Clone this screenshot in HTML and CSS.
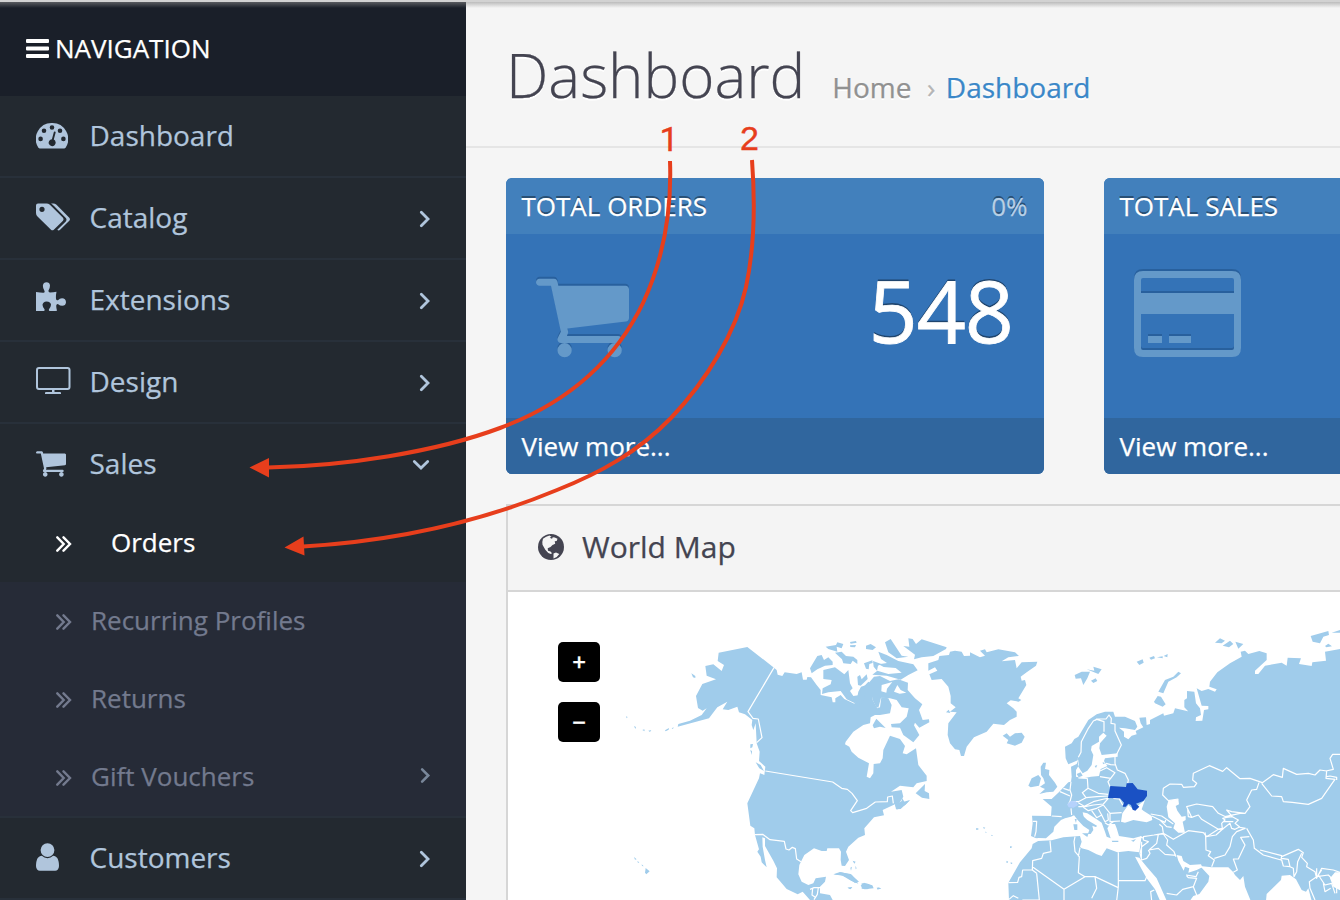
FILE: index.html
```html
<!DOCTYPE html>
<html lang="en">
<head>
<meta charset="utf-8">
<title>Dashboard</title>
<link rel="stylesheet" href="styles.css">
</head>
<body>
<svg class="defs" width="0" height="0">
  <symbol id="cart" viewBox="0 256 1664 1408"><path d="M640 1536q0 52-38 90t-90 38-90-38-38-90 38-90 90-38 90 38 38 90zm896 0q0 52-38 90t-90 38-90-38-38-90 38-90 90-38 90 38 38 90zm128-1088v512q0 24-16.500 42.500t-40.500 21.500l-1044 122q13 60 13 70 0 16-24 64h920q26 0 45 19t19 45-19 45-45 19h-1024q-26 0-45-19t-19-45q0-11 8-31.500t16-36 21.500-40 15.500-29.500l-177-823h-204q-26 0-45-19t-19-45 19-45 45-19h256q16 0 28.500 6.500t19.500 15.500 13 24.500 8 26 5.500 29.500 4.500 26h1201q26 0 45 19t19 45z"/></symbol>
  <symbol id="right" viewBox="0 0 12 18"><path class="line" d="M2.300 2.300L9 9l-6.700 6.700"/></symbol>
  <symbol id="double" viewBox="0 0 16 16"><path class="line thin" d="M1.300 1.300L7.700 8l-6.400 6.700M7.500 1.300L14 8l-6.500 6.700"/></symbol>
</svg>
<div class="page">
  <nav class="sidebar">
    <div class="nav-title"><svg width="23" height="20" viewBox="0 0 23 20"><path d="M1 0h21q1 0 1 1v2q0 1-1 1H1Q0 4 0 3V1q0-1 1-1zM1 7.500h21q1 0 1 1v2q0 1-1 1H1q-1 0-1-1v-2q0-1 1-1zM1 15h21q1 0 1 1v2q0 1-1 1H1q-1 0-1-1v-2q0-1 1-1z"/></svg><span>NAVIGATION</span></div>
    <ul class="menu">
      <li class="item"><span class="icon gauge"><svg width="32" height="26" viewBox="0 0 32 26"><path fill-rule="evenodd" d="M16 0a16 16 0 0 1 13.600 24.700q-.5.800-1.500.8H3.900q-1 0-1.500-.8A16 16 0 0 1 16 0zM16 2.200a2.300 2.300 0 1 0 0 4.600 2.300 2.300 0 0 0 0-4.600zM8 5.500a2.300 2.300 0 1 0 0 4.600 2.300 2.300 0 0 0 0-4.600zM24 5.500a2.300 2.300 0 1 0 0 4.600 2.300 2.300 0 0 0 0-4.600zM4.600 13.600a2.300 2.300 0 1 0 0 4.600 2.300 2.300 0 0 0 0-4.600zM27.400 13.600a2.300 2.300 0 1 0 0 4.600 2.300 2.300 0 0 0 0-4.600zM17.800 9.300q.3-1 1.100-.7.900.2.700 1.200l-1.800 6.800a3.500 3.500 0 1 1-1.900-.4z"/></svg></span><span class="label">Dashboard</span></li>
      <li class="item"><span class="icon"><svg width="34" height="28" viewBox="0 0 34 28"><path fill-rule="evenodd" d="M2 .5h8.500q1.800 0 3.400 1.300L27 14.800q1.200 1.400 0 2.900l-9.200 9q-1.400 1.200-2.800 0L1.500 13.500Q0 12 0 10V2.500Q0 .5 2 .5zM6 3.700a2.600 2.600 0 1 0 0 5.200 2.600 2.600 0 0 0 0-5.200z"/><path d="M15 .5h2.200q1.800 0 3.300 1.300l12.800 13q1.300 1.400 0 2.900l-9.200 9q-1.400 1.300-2.800.1l8.500-8.400q1.400-1.700 0-3.400L18 3Q16.200 1 15 .5z"/></svg></span><span class="label">Catalog</span><svg class="arrow" width="12" height="18"><use href="#right"/></svg></li>
      <li class="item"><span class="icon puzzle"><svg width="30" height="29" viewBox="0 0 30 29"><path d="M0 10q5 .8 7.500.7 1.500-.2 1-1.700Q6.700 6.200 6.900 3.500 7.400.3 10.500.3q3.100 0 3.500 3.200 0 2.600-1.500 5-.3 1.800 1.500 2 3.500 0 6.500-.8-.8 4-.5 7 .3 2.200 2 1.500 1.700-1.900 4-2 3.800.1 4 4-.3 3.500-3.800 3.500-2.200 0-4-1.500-1.700-.5-2 1.500.1 2.700.8 5-4.200.5-7 .5-1.600-.4-1-2 1.800-2 2-4.500-.2-3.100-4.500-3.300-3.500.1-4 3.300.1 2.500 2 4.500.5 1.700-1 2-3 .3-7.500.1z"/></svg></span><span class="label">Extensions</span><svg class="arrow" width="12" height="18"><use href="#right"/></svg></li>
      <li class="item"><span class="icon"><svg width="35" height="28" viewBox="0 0 35 28"><rect class="outline" x="1" y="1" width="32.500" height="21" rx="2"/><path d="M16 22h2.500v3H24q1 0 1 1v1H9v-1q0-1 1-1h6z"/></svg></span><span class="label">Design</span><svg class="arrow" width="12" height="18"><use href="#right"/></svg></li>
      <li class="item open"><span class="icon"><svg width="30" height="26"><use href="#cart"/></svg></span><span class="label">Sales</span><svg class="arrow-down" width="18" height="12" viewBox="0 0 18 12"><path class="line" d="M2.300 2.500L9 9l6.700-6.500"/></svg></li>
    </ul>
    <ul class="submenu">
      <li class="sub active"><svg width="16" height="16"><use href="#double"/></svg><span class="label">Orders</span></li>
      <li class="sub"><svg width="16" height="16"><use href="#double"/></svg><span class="label">Recurring Profiles</span></li>
      <li class="sub"><svg width="16" height="16"><use href="#double"/></svg><span class="label">Returns</span></li>
      <li class="sub"><svg width="16" height="16"><use href="#double"/></svg><span class="label">Gift Vouchers</span><svg class="arrow small" width="11" height="17"><use href="#right"/></svg></li>
    </ul>
    <ul class="menu">
      <li class="item"><span class="icon"><svg width="23" height="28" viewBox="256 128 1280 1536"><path d="M1536 1399q0 109-62.500 187t-150.500 78h-854q-88 0-150.500-78t-62.500-187q0-85 8.500-160.500t31.500-152 58.500-131 94-89 134.500-34.500q131 128 313 128t313-128q76 0 134.500 34.500t94 89 58.500 131 31.500 152 8.500 160.500zm-256-887q0 159-112.500 271.500t-271.500 112.500-271.500-112.500-112.500-271.500 112.500-271.500 271.500-112.500 271.500 112.500 112.500 271.500z"/></svg></span><span class="label">Customers</span><svg class="arrow" width="12" height="18"><use href="#right"/></svg></li>
    </ul>
  </nav>
  <main class="content">
    <header class="page-header">
      <h1>Dashboard</h1>
      <div class="crumbs"><span>Home</span><span class="sep">›</span><a>Dashboard</a></div>
    </header>
    <section class="tiles">
      <article class="tile">
        <div class="tile-head"><span>TOTAL ORDERS</span><span class="pct">0%</span></div>
        <div class="tile-body"><svg class="tile-icon cart" width="93" height="80"><use href="#cart"/></svg><strong>548</strong></div>
        <div class="tile-foot">View more...</div>
      </article>
      <article class="tile">
        <div class="tile-head"><span>TOTAL SALES</span></div>
        <div class="tile-body"><svg class="tile-icon card" width="107" height="86" viewBox="0 0 107 86"><path fill-rule="evenodd" d="M9 0h89q9 0 9 9v68q0 9-9 9H9q-9 0-9-9V9Q0 0 9 0zM9 7Q7 7 7 9v13h93V9q0-2-2-2zM7 43v34q0 2 2 2h89q2 0 2-2V43zM14 65h14v7H14zM35 65h22v7H35z"/></svg></div>
        <div class="tile-foot">View more...</div>
      </article>
    </section>
    <section class="panel">
      <div class="panel-head"><svg width="26" height="26" viewBox="0 0 26 26"><circle cx="13" cy="13" r="13"/><path class="land" d="M5 4.800Q8 2 11.500 1.400l2 1.300-1.800 1 2.300 1L14.800 3.200l2 .3 2.700 1.200-.8 2.300-2 .3.500 2.500-2.700 1.200-2 2-2.800 1.300.3 2.500 2.500.8 1.500 1.700-1.200.8-2.500-1-3-3.300-2.800-5L4.300 8zM15.500 19.500l2.500-1 3.300 1.500-2.600 3-3.200 1.500z"/></svg><h2>World Map</h2></div>
      <div class="map">
        <svg class="world" width="832" height="308" viewBox="508 592 832 308">
          <g transform="translate(610 620) scale(.333333)">
            <path d="M412 81L492 143 500 150 503 164 517 168 524 157 560 162 575 157 579 179 590 179 592 171 603 172 620 195 632 210 632 225 665 232 668 247 676 247 676 235 692 225 703 237 733 251 740 240 745 215 753 200 785 190 788 240 802 265 810 262 814 232 835 235 845 255 840 280 810 285 795 285 782 292 780 310 760 315 730 335 707 365 705 373 718 380 725 395 745 413 777 430 770 470 780 475 790 460 791 432 810 430 818 415 820 390 840 347 870 357 885 378 878 400 890 403 918 385 925 435 950 467 950 483 920 490 910 502 870 497 843 515 875 510 880 530 868 549 900 540 885 555 872 567 858 568 855 553 818 570 822 586 792 592 763 625 765 645 745 653 715 680 708 695 717 720 705 738 695 737 692 720 693 695 687 685 652 685 650 693 635 693 612 685 583 705 568 735 565 763 575 785 595 795 610 790 617 775 648 770 645 785 630 800 630 820 660 825 668 840 600 840 578 815 563 823 530 807 500 772 501 745 490 722 465 678 465 655 457 652 458 680 465 720 470 742 455 727 452 710 442 695 447 688 435 645 433 625 421 617 412 550 447 475 450 460 463 465 466 440 447 423 449 395 440 370 437 310 430 330 425 315 427 300 405 283 387 277 382 260 355 270 338 268 352 245 322 262 297 295 203 320 205 312 240 302 275 285 290 265 278 272 264 264 258 228 277 192 318 178 290 167 286 138 310 133 335 153 342 135 323 123 326 98Z"/>
            <path d="M244 160l12 8v6l-7-2zM48 289l5 2-3 4zM72 318l6 3-2 6zM97 330l6-2 1 6zM115 332l9-2-4 6zM165 331l12-7-1 5-9 5zM185 325l6-3-2 5zM72 711l8 7-5 1zM82 723l6 4-4 2zM95 733l6 6-5-1zM107 744l12 10-10 9-4-5zM421 373l8-1-2 10-6 3zM421 390l5 3-1 12zM437 427l15 8 10 18-14-8zM672 764l20-7 30 5 25 23-12 4-22-16-20-8zM713 803l14-2-5 7zM755 790l22 2 5 10-10 6-17-2zM800 803l13 1-10 5zM728 722l9 3-4 6zM721 743l5-3-3 12zM736 737l4 8-3 3zM731 747l5 11M744 757l3 6"/>
            <path class="border" d="M492 143L414 275 429 295 445 297 456 353 440 368M466 453L668 486 695 505 712 508 726 520 742 542 722 572 728 578 770 565 796 546 832 545 833 531 847 528 850 550M435 644L458 643 480 659 523 664 528 687 537 690 547 682 556 686 560 717 573 725M600 808l12-5h20M608 805l-2 20 12 8M625 803l-3 20-10 16"/>
          </g>
          <g transform="translate(800 620) scale(.333333)">
            <path d="M30 145L52 108 65 105 72 120 85 112 98 125 98 135 75 137 52 148 35 160ZM70 150L105 142 133 163 145 150 150 190 158 205 150 213 160 228 180 225 182 210 205 185 215 190 197 210 192 240 179 260 178 235 165 250 140 238 122 213 85 217 66 222 68 205 92 193 95 180 70 177ZM77 80L108 75 112 67 130 72 125 85 110 80 112 95 85 87ZM105 98L125 95 138 108 160 110 172 120 172 132 158 122 152 132 130 130 126 118ZM150 66l18-3 2 5-18 3zM150 76l18-1-3 7-14-1zM198 77L212 72 228 82 218 90 198 87ZM172 170L180 165 185 178 200 163 203 177 182 197 174 195ZM192 130l25-9 1 8-10 3-2 16-8-2zM219 123l25 9-10 5-3 15-10-12zM255 67L272 57 305 107 325 110 290 115 265 97ZM325 55L338 57 348 72 365 58 440 82 438 87 400 108 365 112 342 118 345 104 310 78 328 80ZM235 95l25 10 35 18 45 10 13 18-28 14-23 14-42-12-43-3 15-12 33 10 40-4-18-14-36-3-15-8 25-4-18-12z"/>
            <path d="M208 187L222 170 240 168 270 183 295 178 324 188 323 210 345 235 367 253 357 270 368 300 387 298 388 307 358 323 345 308 342 316 358 345 340 367 310 345 300 323 275 322 273 312 300 310 320 290 326 265 305 262 290 240 270 235 243 233 235 263 228 260 218 240ZM218 316L229 296 257 324 240 320 222 325ZM347 520L375 492 374 513 387 520 388 537 366 533ZM285 555L305 543 305 532 315 548 330 541 315 556 300 560 291 569ZM438 277l8-8 5 10z"/>
            <path class="water" d="M245 195l32-9-16 20-2 12-15-4zM282 215l10-20 10 15 17 8-20 3z"/>
            <path d="M385 130L415 120 418 108 447 105 450 95 465 92 485 95 492 108 510 107 510 97 540 112 555 107 540 92 555 88 560 97 595 88 645 97 657 108 625 112 605 124 645 120 650 145 665 127 712 125 708 137 680 157 662 170 665 182 675 180 679 195 655 235 664 240 656 245 632 241 620 250 640 265 650 275 650 290 630 300 612 315 580 311 560 335 522 352 500 380 492 408 483 408 478 390 465 388 450 370 443 345 445 310 470 277 450 275 467 262 452 250 452 228 445 200 425 177 395 180 388 163 412 152 405 142 385 152ZM608 347L620 340 630 350 645 340 665 338 674 350 665 368 645 377 620 370 625 360ZM528 625h7v4h-7zM549 621l7 2-4 4zM555 635l5 1-2 3zM573 644l7 3-5 1zM630 680l6 2-6 2zM620 723l4 4-4 1zM632 728l5 2-4 2z"/>
            <path d="M100 763l20-7 35 8 20 27-22-9-25-15zM182 797l10-9 25 8 4 9-28 3zM142 803l15-1-7 5zM232 802l12 3-7 3z"/>
          </g>
          <g transform="translate(1000 620) scale(.333333)">
            <path d="M195 380L215 370 223 357 235 350 265 300 290 283 315 275 340 275 345 290 375 290 405 303 412 320 405 330 375 325 357 323 372 335 372 350 385 358 395 347 410 343 407 333 430 322 422 310 418 293 438 292 440 315 450 312 450 300 490 280 492 287 520 280 525 265 570 275 573 283 553 262 553 240 561 235 561 213 583 215 588 250 600 265 603 285 588 292 587 303 607 302 612 270 625 268 625 258 605 257 590 205 605 213 625 207 645 215 650 208 628 200 630 185 652 157 690 130 725 110 722 95 735 92 745 102 778 93 800 100 800 120 765 152 765 162 775 162 795 137 845 128 860 137 863 113 903 115 897 132 935 138 937 127 978 122 975 95 1022 87V842H935L925 805 918 815 905 810 888 778 870 765 845 767 843 780 800 822 798 842H752L735 800 730 768 720 780 705 765 700 757 685 742 635 742 600 738 628 768 625 785 598 822 580 828 570 842H27L25 788 60 727 95 685 98 672 120 660 98 650 93 648 98 610 96 587 153 588 155 560 128 537 155 537 178 515 205 487 213 485 215 470 213 440 230 432 235 420 205 433 197 415Z"/>
            <path class="water" d="M88 660L115 654 138 655 160 635 163 620 183 600 195 595 213 590 228 583 255 610 248 577 262 580 290 598 305 608 315 635 320 650 332 655 322 625 330 612 345 612 350 625 357 648 400 655 425 648 418 697 385 693 352 697 320 685 305 708 290 703 265 690 245 685 240 680 245 665 240 648 190 652 155 661 115 663ZM363 605L367 580 385 555 400 568 435 540 425 568 430 572 455 588 457 600 440 607 400 600 375 608ZM500 560L505 542 535 537 537 553 527 558 532 572 545 590 557 588 557 600 548 605 555 638 535 638 520 625 525 610 505 592ZM405 710L418 713 440 740 470 775 500 842H480L465 808 440 775 425 748ZM530 705L545 708 550 723 570 735 603 733 607 742 590 750 565 758 568 745 555 740 551 752 535 722ZM233 412L235 440 248 460 262 452 275 435 280 405 273 390 275 378 297 365 297 350 310 338 320 347 300 370 298 385 305 405 353 400 353 410 315 415 312 423 322 438 302 447 297 468 273 470 250 475 228 470 228 450 237 435ZM1022 757L1005 757 990 775 1000 800 1022 812Z"/>
            <path d="M213 585L228 570 247 566 248 575 240 580 262 600 292 618 287 621 277 617 280 630 272 642 264 641 268 630 250 618 233 600 220 583ZM246 640l20-1-4 12zM220 613h12v17h-9zM224 597h6l-2 12zM335 662h20v4h-18zM393 662l15-5-7 8zM122 440L130 428 138 428 135 447 148 450 147 465 165 488 172 500 160 515 140 517 118 522 135 507 120 500 135 490 130 475 123 465ZM85 497L95 475 115 465 123 475 117 497 92 502ZM230 462l12-5 6 10-12 5zM284 438l8-3-4 9zM308 427l8 2-7 4z"/>
            <path d="M224 165L245 155 270 155 262 175 250 195 243 175 227 176ZM260 148L283 152 280 140 305 148 295 162ZM273 182l14-7 5 8-12 6zM410 125l18-7 3 10-13 7zM448 113l14-5 3 7-12 4zM471 112l17-3v6zM491 108l12-6-1 10zM475 215L495 180 520 170 535 155 543 160 530 172 505 185 490 220ZM462 245L473 228 483 230 497 253 488 260 465 250ZM645 68L660 55 675 62 665 70ZM668 77L690 62 700 72 687 82ZM706 65L730 72 715 86ZM932 48L985 33 987 45 970 50 960 70 938 65ZM995 38l27-9v9zM975 78l10-7 11 8-17 3zM30 678l7 2-5 4zM20 722l5 4-5 3zM32 727l6 2-5 3z"/>
            <path class="border" d="M235 412L243 397 244 365 265 325 280 303 290 298 312 305 312 335M285 302L290 297 318 297 327 285 334 295 333 310 345 312 345 333 364 375 350 403M345 410L345 430 352 450 375 460 385 480 383 490M318 430L332 434 345 435M300 453L320 443 345 458 332 475 300 470M332 475L324 485 330 500M262 475L264 505 295 520 325 523M262 475L235 474M264 505L247 518 258 533 290 530 325 528M258 533L235 545 214 545M213 485L210 510 215 525 210 545 205 552M180 515L210 528M190 505L208 511M200 485L190 500M235 560L250 560 280 545 312 537 325 535M235 548L255 560 280 555 310 552 325 535M250 562L265 572 290 565 310 555 330 580 365 578M275 572L290 593 305 585 295 567M305 585L315 605 325 600 323 580M330 582L330 605 360 603M315 608L325 615 340 605M340 535L358 537 368 555M185 590L155 588M213 565L215 585M98 604L110 604 108 635 104 650M452 582L485 588 520 612M455 588L480 600 500 620 515 622M480 600L495 607 497 600M462 645L490 640 487 620 478 613M490 640L520 658 565 632 610 638 620 650 655 628 670 627M425 680L445 665 430 660 430 650 462 645 475 643 470 670 447 690M447 690L475 685 495 703 528 706M475 643L490 642 503 660 500 675 522 695 528 710M420 650L430 655M425 680L420 700 425 720 440 715 450 700 445 690M425 665L424 715M558 765L588 770 595 755M560 768L565 773 590 775 580 800 590 825M580 800L548 808 530 825 500 820"/>
            <path class="border" d="M535 537L505 542 488 525 490 505 510 492 545 493 550 502 583 500 590 490 578 480 580 460 628 437 668 454 680 443 720 476 750 475 787 488 820 464 847 472 850 445 890 463 925 460 945 465 960 450 980 453 978 475 1005 478 1000 485 965 535 925 553 877 547 850 545 845 530 815 528 785 490M978 453L1000 448 990 415 998 403 1022 403M980 470L990 468 1010 472 1010 480M777 488L770 508 755 510 740 540 750 560 735 580 695 575 680 570 697 590 715 600 705 610 720 622 737 625M563 568L565 590 575 592 560 560 590 552 638 560 655 580 680 592 697 590M575 592L595 585 605 598 655 628 667 625 665 610 675 600 668 595 680 592M675 590L720 580 735 580M700 605L670 605M667 628L690 610 695 625 705 628 720 620M615 637L617 650 648 645 668 627M617 650L618 690 632 695 625 707 643 720 635 740M643 715L675 705 690 680 697 650 710 635 735 625M740 625L760 660 763 685 790 705 843 720 845 707 780 690M748 650L722 652 735 675 715 717 700 717 712 750 700 757M845 710L895 688 910 698 905 712 922 730 920 740 945 755 950 775 965 745 1000 750 1020 757M845 715L865 718 870 740 880 745 882 770 890 755 893 725 905 700M845 720L850 738 870 740M950 745L950 770 928 785 930 805 945 840M965 750L955 765 975 795 995 790 1005 820M950 770L985 765 1010 790 1010 820M970 790L975 815 992 805"/>
            <path class="border" d="M150 662L153 695 130 700 125 715 98 722 97 750 68 750 65 770 57 772 53 787 25 788M97 740L192 808 255 770 235 758 238 710 225 695 222 665 225 650M240 683L235 710M110 760L118 840H67M110 760L97 750M192 808V840M255 770L285 770 353 802M355 697V782H435L440 770M355 782V800L350 842M285 770L290 805 275 835M455 842L452 815 463 810M27 838L40 827 55 835"/>
            <path class="swiss" d="M201 553L213 543 228 544 234 555 221 563 206 562Z"/>
            <path class="ukraine" d="M331 498L378 501 380 490 398 489 413 508 441 512 441 528 430 543 408 551 418 560 406 572 398 569 393 555 385 551 377 560 368 560 372 548 360 535 324 534Z"/>
          </g>
        </svg>
        <div class="zoom-controls"><button>+</button><button>−</button></div>
      </div>
    </section>
  </main>
  <svg class="notes" width="1340" height="900" viewBox="0 0 1340 900">
    <path d="M670 161C672 215 662 262 643 303C613 365 562 405 500 428C436 452 345 466 268 467.500"/>
    <path d="M752 160C755 200 755 245 746 287C736 332 707 380 671 418C638 452 600 473 557 490C480 522 395 541 303 546.500"/>
    <path class="head" d="M249.500 467.500l19.500-9.500v19.500zM284.500 547.500l19-11 1 19z"/>
    <text class="one" x="659.500" y="151">1</text><text x="740" y="149.500">2</text>
  </svg>
</div>
</body>
</html>
```
FILE: styles.css
```css
* { box-sizing: border-box; }
body { margin: 0; font-family: "Open Sans", "Noto Sans", sans-serif; background: #f5f5f5; }
ul { list-style: none; margin: 0; padding: 0; }
h1, h2 { margin: 0; font-weight: 400; }
.defs { display: none; }
.page { position: relative; display: flex; width: 1340px; height: 900px; overflow: hidden; -webkit-text-stroke: .25px; }
.page::before { content: ""; position: absolute; z-index: 2; left: 0; top: 0; width: 100%; height: 8px; background: linear-gradient(#d2d2d2 0 2px, rgba(140,140,140,.55) 2px, rgba(140,140,140,0) 8px); }
.sidebar { flex: 0 0 466px; height: 900px; overflow: hidden; background: #232930; color: #b0c5dc; fill: #b0c5dc; }
.nav-title { display: flex; align-items: center; gap: 6px; height: 96px; padding-left: 26px; background: #1a1f29; color: #fff; fill: #fff; font-size: 26px; line-height: 36px; }
.nav-title svg { margin-top: 1px; }
.item { display: flex; align-items: center; height: 82px; padding: 0 35px 2px 36px; border-bottom: 2px solid #28303a; font-size: 28px; line-height: 38px; }
.item.open { height: 80px; border-bottom: 0; }
.icon { display: flex; flex: 0 0 53.500px; margin-top: -1px; }
.icon.gauge { margin-top: 2px; }
.icon.puzzle { margin-top: -5px; }
.item.open .icon { margin-top: 1px; }
.label { flex: 1; }
.line { fill: none; stroke: #b0c5dc; stroke-width: 2.800; stroke-linecap: round; }
.thin { stroke: currentColor; stroke-width: 2.400; }
.outline { fill: none; stroke: #b0c5dc; stroke-width: 2; }
.arrow { margin-top: 3px; }
.arrow-down { margin: 3px 1px 0 0; }
.submenu { background: #262b37; border-bottom: 2px solid #28303a; }
.sub { display: flex; align-items: center; height: 78px; padding: 0 35px 2px 55.500px; gap: 19.500px; color: #737a8e; font-size: 26px; line-height: 36px; }
.sub svg { margin-top: 3px; }
.sub .small { margin-top: -1px; opacity: .6; }
.sub.active { background: #232930; color: #fff; gap: 39.500px; }
.content { flex: 0 0 874px; }
.page-header { display: flex; align-items: baseline; height: 148px; padding: 34px 0 0 40px; border-bottom: 2px solid #e5e5e5; text-shadow: 0 2px #fff; }
h1 { color: #444451; font-size: 60px; line-height: 82px; font-weight: 300; }
.crumbs { display: flex; align-items: baseline; margin-left: 27px; font-size: 28px; color: #919191; }
.sep { margin: 0 10.500px 0 15.500px; color: #b5b5b5; }
.crumbs a { color: #3a87c8; }
.tiles { display: flex; gap: 60px; padding: 30px 0 0 40px; }
.tile { flex: 0 0 538px; height: 296px; border-radius: 6px; overflow: hidden; background: #3473b7; color: #fff; font-size: 26px; text-shadow: 0 -2px rgba(0,0,0,.4); }
.tile-head { display: flex; justify-content: space-between; height: 56px; padding: 0 16.500px 0 15.500px; line-height: 57px; background: #4280bc; }
.pct { color: #b8d0e6; }
.tile-body { display: flex; justify-content: space-between; height: 184px; padding: 0 31px 0 30px; }
.tile-body strong { font-size: 86px; line-height: 117px; font-weight: 400; margin-top: 17px; letter-spacing: -1px; -webkit-text-stroke: .8px; }
.tile-icon { fill: #6499c9; filter: drop-shadow(0 -2px rgba(0,30,70,.22)); }
.cart { margin-top: 44px; }
.card { margin: 37px 0 0 -.5px; }
.tile-foot { height: 56px; padding-left: 15.500px; line-height: 57px; background: #30669e; text-shadow: none; }
.panel { margin: 30px 0 0 40px; border: 2px solid #d6d6d6; border-right: 0; background: #fff; }
.panel-head { display: flex; align-items: center; gap: 18px; height: 86px; padding: 0 0 2px 30px; border-bottom: 2px solid #d6d6d6; background: #f4f4f4; color: #444451; fill: #444451; }
.land { fill: #f4f4f4; }
h2 { font-size: 30px; line-height: 40px; }
.map { position: relative; height: 308px; }
.world { display: block; fill: #a0cceb; }
.water { fill: #fff; }
.border { fill: none; stroke: #fff; stroke-width: 3.600; stroke-linejoin: round; }
.swiss { fill: #b5d2fc; }
.ukraine { fill: #1a51c4; }
.zoom-controls { position: absolute; left: 50px; top: 50px; display: flex; flex-direction: column; gap: 20px; }
.zoom-controls button { width: 42px; height: 40px; padding: 0; border: 0; border-radius: 5px; background: #000; color: #fff; font: 600 24px/40px "Open Sans", sans-serif; }
.notes { position: absolute; z-index: 3; left: 0; top: 0; pointer-events: none; fill: none; stroke: #e73e1c; stroke-width: 4; -webkit-text-stroke: 0; }
.notes .head { fill: #e73e1c; stroke: none; }
.notes text { fill: #e73e1c; stroke: #e73e1c; stroke-width: .4; font: 34px "Liberation Sans", sans-serif; }
.notes .one { font-family: Roboto, sans-serif; }
```
